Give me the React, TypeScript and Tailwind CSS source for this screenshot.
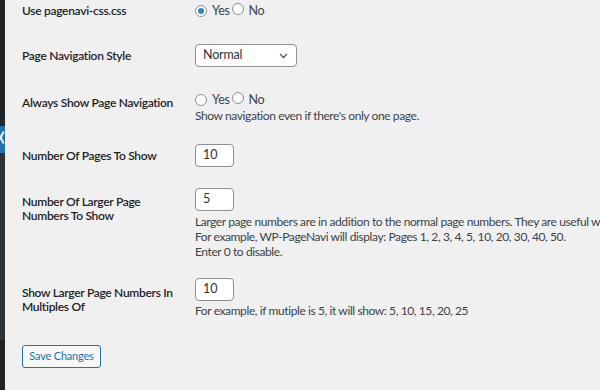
import React from "react";

const font = { fontFamily: "Lato, 'Liberation Sans', sans-serif" };

function Radio({ checked }: { checked?: boolean }) {
  return (
    <span className="inline-flex h-[12px] w-[12px] items-center justify-center rounded-full border border-[#8c8f94] bg-white">
      {checked && <span className="h-[6px] w-[6px] rounded-full bg-[#3582c4]" />}
    </span>
  );
}

function RadioPair({ yes }: { yes?: boolean }) {
  return (
    <div className="flex items-center text-[12.5px] tracking-[-0.3px] text-[#3c434a]">
      <Radio checked={yes} />
      <span className="ml-[5px]">Yes</span>
      <span className="ml-[2px]"><Radio /></span>
      <span className="ml-[5px]">No</span>
    </div>
  );
}

function NumInput({ value }: { value: string }) {
  return (
    <div className="flex h-[23px] w-[39px] items-center rounded-[4px] border border-[#8c8f94] bg-white pl-[7px] text-[12.5px] text-[#2c3338]">
      {value}
    </div>
  );
}

const label = "w-[173px] text-[12px] font-semibold tracking-[-0.3px]";
const desc = "text-[12px] leading-[15px] tracking-[-0.4px] text-[#3c434a]";

export default function App() {
  return (
    <div className="flex h-[390px] w-[600px] overflow-hidden bg-[#f0f0f1]" style={font}>
      <div className="relative h-full w-[5px] shrink-0">
        <div className="h-[118px] bg-[#1d2327]" />
        <div className="h-[8px] bg-[#23282d]" />
        <div className="relative h-[27px] bg-[#2271b1]">
          <svg className="absolute left-0 top-0" width="5" height="27" viewBox="0 0 5 27">
            <polygon points="0,10 3,5 4.5,6 1.8,11.5 4.5,17 3,18 0,13" fill="#f0f0f1" />
          </svg>
        </div>
        <div className="h-[187px] bg-[#2c3338]" />
        <div className="h-[50px] bg-[#1d2327]" />
      </div>

      <div className="min-w-0 flex-1 pl-[17px] text-[#1d2327]">
        {/* Row 1 */}
        <div className="flex h-[22px] items-center">
          <div className={label}>Use pagenavi-css.css</div>
          <RadioPair yes />
        </div>

        {/* Row 2 */}
        <div className="mt-[22px] flex h-[23px] items-center">
          <div className={label}>Page Navigation Style</div>
          <div className="flex h-[23px] w-[102px] items-center justify-between rounded-[4px] border border-[#8c8f94] bg-white pl-[7px] pr-[8px] text-[12.5px] tracking-[-0.2px] text-[#2c3338]">
            <span>Normal</span>
            <svg width="9" height="6" viewBox="0 0 9 6">
              <path d="M1 1 L4.5 4.5 L8 1" stroke="#50575e" strokeWidth="1.3" fill="none" />
            </svg>
          </div>
        </div>

        {/* Row 3 */}
        <div className="mt-[24px] flex">
          <div className={`${label} pt-[3px] leading-[18px]`}>Always Show Page Navigation</div>
          <div>
            <div className="flex h-[18px] items-center">
              <RadioPair />
            </div>
            <div className={`${desc} -mt-[1px]`}>Show navigation even if there's only one page.</div>
          </div>
        </div>

        {/* Row 4 */}
        <div className="mt-[21px] flex h-[23px] items-center">
          <div className={label}>Number Of Pages To Show</div>
          <NumInput value="10" />
        </div>

        {/* Row 5 */}
        <div className="mt-[21px] flex">
          <div className={`${label} pt-[7px] leading-[14px]`}>
            Number Of Larger Page
            <br />
            Numbers To Show
          </div>
          <div className="min-w-0">
            <NumInput value="5" />
            <div className={`${desc} mt-[3px] whitespace-nowrap`}>
              Larger page numbers are in addition to the normal page numbers. They are useful w
              <br />
              For example, WP-PageNavi will display: Pages 1, 2, 3, 4, 5, 10, 20, 30, 40, 50.
              <br />
              Enter 0 to disable.
            </div>
          </div>
        </div>

        {/* Row 6 */}
        <div className="mt-[19px] flex">
          <div className={`${label} pt-[8px] leading-[14px]`}>
            Show Larger Page Numbers In
            <br />
            Multiples Of
          </div>
          <div>
            <NumInput value="10" />
            <div className={`${desc} mt-[2px]`}>For example, if mutiple is 5, it will show: 5, 10, 15, 20, 25</div>
          </div>
        </div>

        {/* Button */}
        <div className="mt-[27px]">
          <div className="flex h-[23px] w-[79px] items-center justify-center rounded-[3px] border border-[#2271b1] bg-[#f6f7f7] text-[11px] tracking-[-0.2px] text-[#2271b1]">
            Save Changes
          </div>
        </div>
      </div>
    </div>
  );
}
